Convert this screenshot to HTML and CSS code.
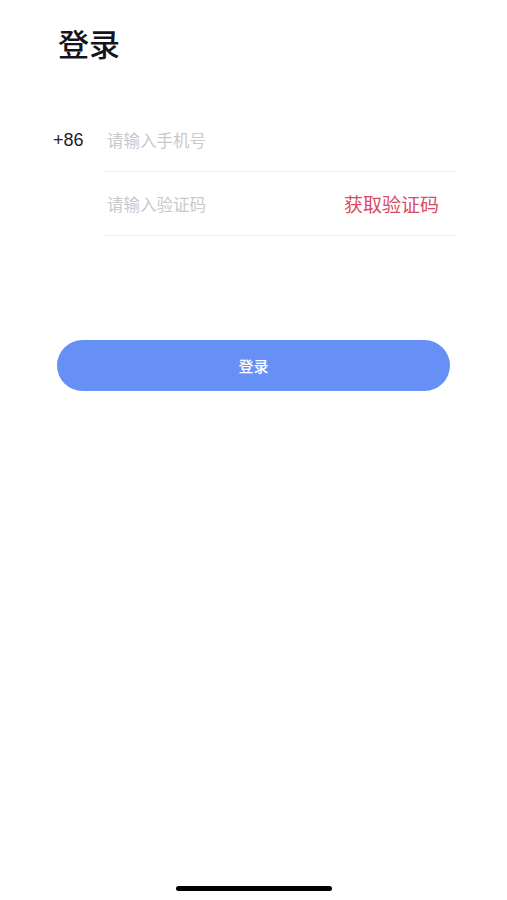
FILE: index.html
```html
<!DOCTYPE html>
<html lang="zh-CN">
<head>
<meta charset="utf-8">
<title>登录</title>
<link rel="stylesheet" href="styles.css">
</head>
<body>
<div class="page">
  <h1 class="title">登录</h1>
  <div class="form">
    <div class="row">
      <span class="prefix">+86</span>
      <div class="field">
        <span class="placeholder">请输入手机号</span>
      </div>
    </div>
    <div class="row">
      <span class="prefix"></span>
      <div class="field">
        <span class="placeholder">请输入验证码</span>
        <span class="code-btn">获取验证码</span>
      </div>
    </div>
  </div>
  <div class="btn-wrap">
    <div class="login-btn">登录</div>
  </div>
  <div class="spacer"></div>
  <div class="home-bar-wrap"><div class="home-bar"></div></div>
</div>
</body>
</html>
```

FILE: styles.css
```css
html, body {
  margin: 0;
  padding: 0;
  background: #ffffff;
}
body {
  font-family: "Noto Sans CJK SC", "Liberation Sans", sans-serif;
}
.page {
  width: 507px;
  height: 900px;
  display: flex;
  flex-direction: column;
  box-sizing: border-box;
}
.title {
  margin: 0;
  padding: 22px 0 0 58px;
  height: 42px;
  font-size: 31px;
  line-height: 42px;
  font-weight: 500;
  color: #14141f;
}
.form {
  margin-top: 44px;
  padding-left: 53px;
}
.row {
  display: flex;
  height: 64px;
}
.prefix {
  width: 51px;
  flex: none;
  font-family: "Liberation Sans", sans-serif;
  font-size: 18px;
  color: #222228;
  display: flex;
  align-items: center;
}
.field {
  width: 351px;
  display: flex;
  align-items: center;
  justify-content: space-between;
  border-bottom: 1px solid #efefef;
  box-sizing: border-box;
  padding-left: 3px;
  padding-right: 16px;
}
.placeholder {
  font-size: 16.5px;
  color: #c9c9cc;
}
.code-btn {
  font-size: 19px;
  color: #d84b65;
}
.btn-wrap {
  padding: 104px 0 0 57px;
}
.login-btn {
  width: 393px;
  height: 51px;
  border-radius: 26px;
  background: #6690f5;
  color: #ffffff;
  font-size: 15px;
  font-weight: 500;
  display: flex;
  align-items: center;
  justify-content: center;
}
.spacer {
  flex: 1;
}
.home-bar-wrap {
  display: flex;
  justify-content: center;
  padding: 0 0 9px 0;
}
.home-bar {
  width: 156px;
  height: 5px;
  border-radius: 3px;
  background: #000000;
}
```
